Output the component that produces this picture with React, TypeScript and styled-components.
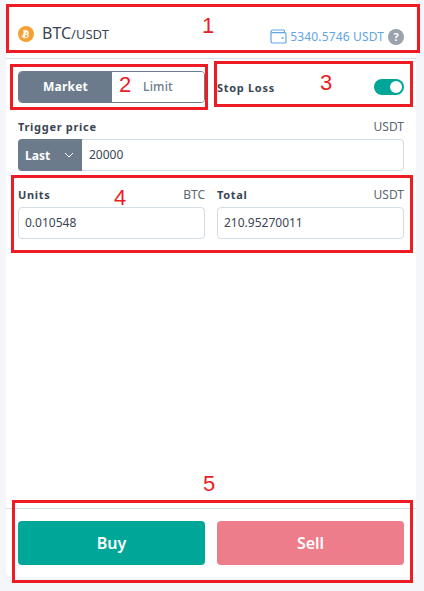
import styled, { createGlobalStyle } from "styled-components";

const GlobalStyle = createGlobalStyle`
  html, body {
    margin: 0;
    padding: 0;
    background: #f5f6f9;
  }
  * { box-sizing: border-box; }
`;

type FieldProps = {
  label: string;
  unit: string;
  value: string;
};

// поле ввода с подписью
const Field = (props: FieldProps) => (
  <FieldBox>
    <LabelRow>
      <Label>{props.label}</Label>
      <Unit>{props.unit}</Unit>
    </LabelRow>
    <Input>{props.value}</Input>
  </FieldBox>
);

const notes = [
  { n: "1", left: 202, top: 13 },
  { n: "2", left: 119, top: 72 },
  { n: "3", left: 320, top: 70 },
  { n: "4", left: 114, top: 185 },
  { n: "5", left: 203, top: 471 },
];

const frames = [
  { left: 6, top: 4, w: 414, h: 49 },
  { left: 10, top: 64, w: 198, h: 46 },
  { left: 214, top: 61, w: 199, h: 46 },
  { left: 11, top: 175, w: 402, h: 78 },
  { left: 12, top: 500, w: 401, h: 83 },
];

export default function App() {
  return (
    <Page>
      <GlobalStyle />
      <Card>
        {/* шапка */}
        <Header>
          <Pair>
            <svg width="16" height="16" viewBox="0 0 16 16">
              <circle cx="8" cy="8" r="8" fill="#f5a033" />
              <path
                fillRule="evenodd"
                d="M6.6 3.4l1 .2-.2 1 .8.2.3-1 1 .2-.3 1.1c1.2.4 1.9 1.1 1.7 2.1-.1.7-.5 1.1-1.1 1.2.8.4 1.1 1.1.9 1.9-.3 1.3-1.4 1.6-2.9 1.4l-.3 1-1-.2.3-1-.8-.2-.3 1-1-.2.3-1.1-1.6-.4.5-1.2c.5.1.9.3 1-.1l.9-3.6c0-.3-.3-.5-.9-.6l.3-1 1.5.4zM7.4 8.5l-.5 2c.9.2 2.3.5 2.6-.6.2-1-1.2-1.2-2.1-1.4zM7.9 6.4l-.4 1.2c.8.2 1.9.4 2.1-.5.2-.9-.9-.5-1.7-.7z"
                fill="#fff"
              />
            </svg>
            <Base>BTC</Base>
            <Quote>/USDT</Quote>
          </Pair>
          <Balance>
            <svg width="17" height="15" viewBox="0 0 17 15" fill="none" stroke="#5fa5e6" strokeWidth="1.2">
              <path d="M1 3.5V12.6c0 .8.6 1.4 1.4 1.4h12.2c.8 0 1.4-.6 1.4-1.4V5c0-.8-.6-1.4-1.4-1.4H1.6" />
              <path d="M1 3.5C1 2 1.7 1 3 1h10.5c.7 0 1 .5 1 1.2v1.4" />
              <path d="M11.5 9h2" strokeWidth="1.6" />
            </svg>
            <Amount>5340.5746 USDT</Amount>
            <Help>?</Help>
          </Balance>
        </Header>

        <Main>
          <Row>
            <Segmented>
              <Segment $active>Market</Segment>
              <Segment>Limit</Segment>
            </Segmented>
            <StopLoss>
              <Label>Stop Loss</Label>
              <Toggle />
            </StopLoss>
          </Row>

          <TriggerBox>
            <LabelRow>
              <Label>Trigger price</Label>
              <Unit>USDT</Unit>
            </LabelRow>
            <InputGroup>
              <Select>
                Last
                <svg width="10" height="6" viewBox="0 0 10 6" fill="none" stroke="#fff" strokeWidth="1">
                  <path d="M1 1l4 4 4-4" />
                </svg>
              </Select>
              <GroupInput>20000</GroupInput>
            </InputGroup>
          </TriggerBox>

          <Row>
            <Field label="Units" unit="BTC" value="0.010548" />
            <Field label="Total" unit="USDT" value="210.95270011" />
          </Row>
        </Main>

        {/* кнопки */}
        <Footer>
          <ActionButton $color="#00a698">Buy</ActionButton>
          <ActionButton $color="#ee7d8b">Sell</ActionButton>
        </Footer>
      </Card>

      {/* красная разметка поверх скриншота */}
      {frames.map((f) => (
        <Frame key={f.left + "-" + f.top} style={{ left: f.left, top: f.top, width: f.w, height: f.h }} />
      ))}
      {notes.map((x) => (
        <Note key={x.n} style={{ left: x.left, top: x.top }}>
          {x.n}
        </Note>
      ))}
    </Page>
  );
}

const Page = styled.div`
  position: relative;
  width: 424px;
  height: 591px;
  padding: 0 8px 14px 6px;
  overflow: hidden;
  font-family: "Noto Sans", "Open Sans", sans-serif;
`;

const Card = styled.div`
  background: #fff;
  height: 100%;
  display: flex;
  flex-direction: column;
  border-radius: 0 0 6px 6px;
`;

const Header = styled.div`
  height: 59px;
  flex: none;
  padding: 9px 12px 0;
  display: flex;
  justify-content: space-between;
  align-items: center;
  border-bottom: 1px solid #d3dde5;
`;

const Pair = styled.div`
  display: flex;
  align-items: baseline;
  color: #3a4653;

  svg {
    align-self: center;
    margin-right: 8px;
  }
`;

const Base = styled.span`
  font-size: 16px;
  line-height: 22px;
`;

const Quote = styled.span`
  font-size: 13px;
  line-height: 22px;
`;

const Balance = styled.div`
  display: flex;
  align-items: center;
  padding-top: 6px;
`;

const Amount = styled.span`
  margin: 0 4px 0 3px;
  font-size: 12px;
  letter-spacing: 0.15px;
  color: #5fa5e6;
`;

const Help = styled.span`
  width: 16px;
  height: 16px;
  border-radius: 50%;
  background: #9aa2ac;
  color: #fff;
  font-size: 11px;
  font-weight: 700;
  line-height: 16px;
  text-align: center;
`;

const Main = styled.div`
  flex: 1;
  padding: 12px 12px 0;
  display: flex;
  flex-direction: column;
`;

const Row = styled.div`
  display: grid;
  grid-template-columns: 187px 187px;
  gap: 12px;
`;

const Segmented = styled.div`
  height: 32px;
  display: flex;
  border: 1px solid #6b7b8c;
  border-radius: 4px;
  overflow: hidden;
`;

const Segment = styled.div<{ $active?: boolean }>`
  width: ${(p) => (p.$active ? "93px" : "92px")};
  background: ${(p) => (p.$active ? "#6b7b8c" : "#fff")};
  color: ${(p) => (p.$active ? "#fff" : "#6b7b8c")};
  font-size: 12px;
  font-weight: ${(p) => (p.$active ? 700 : 500)};
  letter-spacing: 0.2px;
  line-height: 30px;
  text-align: center;
`;

const StopLoss = styled.div`
  display: flex;
  justify-content: space-between;
  align-items: center;
`;

const Toggle = styled.div`
  position: relative;
  width: 30px;
  height: 16px;
  border-radius: 8px;
  background: #00a698;

  &::after {
    content: "";
    position: absolute;
    right: 2px;
    top: 2px;
    width: 12px;
    height: 12px;
    border-radius: 50%;
    background: #fff;
  }
`;

const TriggerBox = styled.div`
  margin-top: 15px;
`;

const FieldBox = styled.div`
  margin-top: 15px;
`;

const LabelRow = styled.div`
  height: 16px;
  margin-bottom: 5px;
  display: flex;
  justify-content: space-between;
  align-items: center;
`;

const Label = styled.span`
  font-size: 11px;
  font-weight: 700;
  letter-spacing: 0.7px;
  color: #3a4653;
`;

const Unit = styled.span`
  font-size: 12px;
  color: #5a6672;
`;

const InputGroup = styled.div`
  height: 32px;
  display: flex;
`;

const Select = styled.div`
  width: 64px;
  padding: 0 8px 0 7px;
  display: flex;
  justify-content: space-between;
  align-items: center;
  background: #6b7b8c;
  border-radius: 4px 0 0 4px;
  color: #fff;
  font-size: 12px;
  font-weight: 700;
`;

const GroupInput = styled.div`
  flex: 1;
  padding-left: 7px;
  border: 1px solid #d3dde5;
  border-left: none;
  border-radius: 0 4px 4px 0;
  font-size: 12px;
  line-height: 30px;
  color: #3a4653;
`;

const Input = styled.div`
  height: 32px;
  padding-left: 6px;
  border: 1px solid #d3dde5;
  border-radius: 4px;
  font-size: 12px;
  line-height: 30px;
  color: #3a4653;
`;

const Footer = styled.div`
  flex: none;
  height: 69px;
  padding: 12px 12px 12px;
  display: grid;
  grid-template-columns: 187px 187px;
  gap: 12px;
  border-top: 1px solid #d3dde5;
`;

const ActionButton = styled.div<{ $color: string }>`
  background: ${(p) => p.$color};
  border-radius: 4px;
  color: #fff;
  font-size: 16px;
  font-weight: 600;
  line-height: 44px;
  text-align: center;
`;

const Frame = styled.div`
  position: absolute;
  border: 3px solid #ed1c24;
`;

const Note = styled.span`
  position: absolute;
  font-family: "Liberation Sans", sans-serif;
  font-size: 22px;
  line-height: 26px;
  color: #ed1c24;
`;
